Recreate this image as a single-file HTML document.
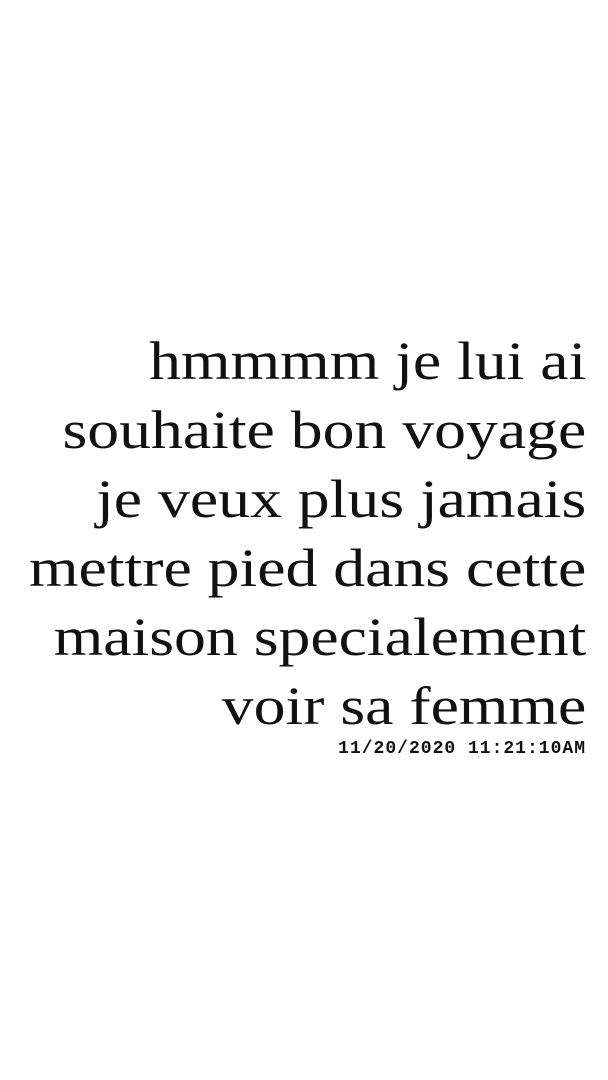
<!DOCTYPE html>
<html><head><meta charset="utf-8"><style>
html,body{margin:0;padding:0;background:#fff;width:608px;height:1080px;overflow:hidden}
.t{position:absolute;right:22px;top:327px;text-align:right;font-family:"Liberation Serif",serif;font-size:54px;line-height:69px;color:#111;white-space:nowrap;transform:scaleX(1.18);transform-origin:right top}
.d{position:absolute;right:22px;top:739px;font-family:"Liberation Mono",monospace;font-weight:bold;font-size:18px;letter-spacing:1px;color:#111}
</style></head><body>
<div class="t">hmmmm je lui ai<br>souhaite bon voyage<br>je veux plus jamais<br>mettre pied dans cette<br>maison specialement<br>voir sa femme</div>
<div class="d">11/20/2020 11:21:10AM</div>
</body></html>
